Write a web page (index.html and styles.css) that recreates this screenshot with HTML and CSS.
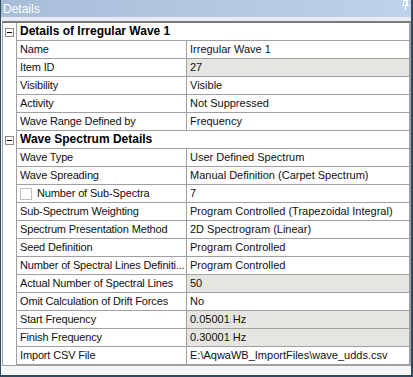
FILE: index.html
```html
<!DOCTYPE html>
<html lang="en">
<head>
    <meta charset="UTF-8">
    <meta name="viewport" content="width=device-width, initial-scale=1.0">
    <title>Details</title>
    <link rel="stylesheet" href="styles.css">
</head>
<body>
    <div class="window">
        <div class="titlebar">
            <span class="title">Details</span>
            <svg class="pin" width="7" height="10" viewBox="0 0 7 10">
                <path d="M1.5 0.5h4v5h-4z M0 5.5h7 M3.5 5.5v4.5 M4.5 0.5v5" fill="none" stroke="#fff" stroke-width="1"/>
            </svg>
        </div>
        <div class="band"></div>

        <div class="grid">
            <!-- Sección 1 -->
            <div class="row header">
                <div class="gutter"><span class="toggle"></span></div>
                <div class="htext">Details of Irregular Wave 1</div>
            </div>
            <div class="row"><div class="gutter"></div><div class="name">Name</div><div class="value">Irregular Wave 1</div></div>
            <div class="row"><div class="gutter"></div><div class="name">Item ID</div><div class="value readonly">27</div></div>
            <div class="row"><div class="gutter"></div><div class="name">Visibility</div><div class="value">Visible</div></div>
            <div class="row"><div class="gutter"></div><div class="name">Activity</div><div class="value">Not Suppressed</div></div>
            <div class="row"><div class="gutter"></div><div class="name">Wave Range Defined by</div><div class="value">Frequency</div></div>

            <!-- Sección 2 -->
            <div class="row header">
                <div class="gutter"><span class="toggle"></span></div>
                <div class="htext">Wave Spectrum Details</div>
            </div>
            <div class="row"><div class="gutter"></div><div class="name">Wave Type</div><div class="value">User Defined Spectrum</div></div>
            <div class="row"><div class="gutter"></div><div class="name">Wave Spreading</div><div class="value">Manual Definition (Carpet Spectrum)</div></div>
            <div class="row"><div class="gutter"></div><div class="name"><span class="check"></span>Number of Sub-Spectra</div><div class="value">7</div></div>
            <div class="row"><div class="gutter"></div><div class="name">Sub-Spectrum Weighting</div><div class="value">Program Controlled (Trapezoidal Integral)</div></div>
            <div class="row"><div class="gutter"></div><div class="name">Spectrum Presentation Method</div><div class="value">2D Spectrogram (Linear)</div></div>
            <div class="row"><div class="gutter"></div><div class="name">Seed Definition</div><div class="value">Program Controlled</div></div>
            <div class="row"><div class="gutter"></div><div class="name">Number of Spectral Lines Definiti...</div><div class="value">Program Controlled</div></div>
            <div class="row"><div class="gutter"></div><div class="name">Actual Number of Spectral Lines</div><div class="value readonly">50</div></div>
            <div class="row"><div class="gutter"></div><div class="name">Omit Calculation of Drift Forces</div><div class="value">No</div></div>
            <div class="row"><div class="gutter"></div><div class="name">Start Frequency</div><div class="value readonly">0.05001 Hz</div></div>
            <div class="row"><div class="gutter"></div><div class="name">Finish Frequency</div><div class="value readonly">0.30001 Hz</div></div>
            <div class="row"><div class="gutter"></div><div class="name">Import CSV File</div><div class="value">E:\AqwaWB_ImportFiles\wave_udds.csv</div></div>
        </div>
    </div>
</body>
</html>
```

FILE: styles.css
```css
body {
    margin: 0;
    padding: 0;
    font-family: 'Liberation Sans', Arial, sans-serif;
    font-size: 11px;
    color: #111;
    background-color: #ffffff;
}
.window {
    width: 410px;
    height: 375px;
    border-left: 1px solid #33485a;
    border-right: 2px solid #33485a;
    border-bottom: 2px solid #33485a;
    background-color: #f4f6f8;
    display: flex;
    flex-direction: column;
}
.titlebar {
    height: 17px;
    background: linear-gradient(to right, #a6bed8, #bcd3ea);
    display: flex;
    align-items: center;
    justify-content: space-between;
    padding: 0 2px 0 2px;
}
.title {
    color: #fff;
    font-size: 12px;
}
.pin {
    align-self: flex-start;
    margin-top: 0;
}
.band {
    height: 4px;
    background-color: #e6ecf2;
}
.grid {
    margin: 0 0 0 1px;
    width: 406px;
    border-top: 2px solid #7a7a7a;
    border-left: 1px solid #a0a0a0;
    border-right: 2px solid #a0a0a0;
    border-bottom: 1px solid #a0a0a0;
    background-color: #fff;
}
.row {
    display: grid;
    grid-template-columns: 14px 170px 1fr;
    height: 18px;
}
.row .gutter {
    border-right: 1px solid #a0a0a0;
    display: flex;
    align-items: center;
    justify-content: center;
}
.row .name,
.row .value,
.row .htext {
    border-bottom: 1px solid #a0a0a0;
    padding-left: 3px;
    line-height: 17px;
    white-space: nowrap;
    overflow: hidden;
}
.row .name {
    border-right: 1px solid #a0a0a0;
    display: flex;
    align-items: center;
    letter-spacing: -0.15px;
}
.row .value {
    padding-left: 3px;
}
.row .readonly {
    background-color: #e6e5e1;
}
.header .htext {
    grid-column: 2 / 4;
    font-weight: bold;
    font-size: 12px;
    color: #000;
}
.toggle {
    width: 7px;
    height: 7px;
    border: 1px solid #8a8a8a;
    background-color: #fff;
    position: relative;
}
.toggle::after {
    content: "";
    position: absolute;
    left: 1px;
    top: 3px;
    width: 5px;
    height: 1px;
    background-color: #000;
}
.check {
    width: 10px;
    height: 10px;
    border: 1px solid #c0c0c0;
    background-color: #fff;
    margin-right: 5px;
}
```
